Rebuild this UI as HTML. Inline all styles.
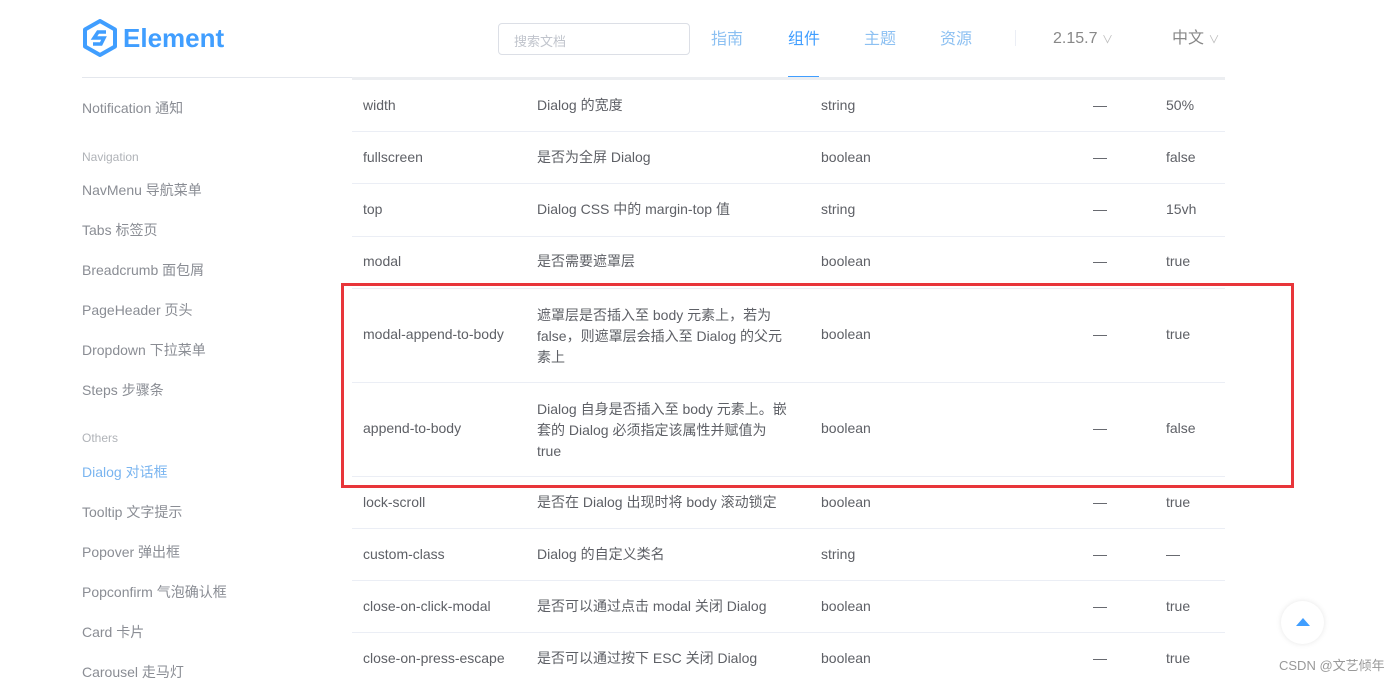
<!DOCTYPE html>
<html><head><meta charset="utf-8"><style>
*{margin:0;padding:0;box-sizing:border-box}
body{width:1400px;height:680px;overflow:hidden;background:#fff;font-family:"Liberation Sans","Noto Sans CJK SC",sans-serif;position:relative;color:#606266}
.a{position:absolute;white-space:nowrap}
.side{font-size:14px;color:#8a8d94;line-height:16px}
.sec{font-size:12px;color:#b0b3b8;line-height:14px}
.nav{font-size:16px;color:#8cc0f2;top:31px;line-height:18px}
.t{font-size:14px;color:#5e6066;line-height:16px}
.line{position:absolute;left:352px;width:873px;height:1px;background:#ebeef5}
</style></head><body>
<svg class="a" style="left:82px;top:19px" width="36" height="38" viewBox="0 0 36 38"><path d="M18 2 L33 10.5 V27.5 L18 36 L3 27.5 V10.5 Z" fill="none" stroke="#409eff" stroke-width="4" stroke-linejoin="round"/><path d="M24 13 H16 L12 19 H22 L19 25 H11" fill="none" stroke="#409eff" stroke-width="3.5"/></svg>
<div class="a" style="left:123px;top:23px;font-size:26px;line-height:30px;font-weight:bold;color:#409eff">Element</div>
<div class="a" style="left:498px;top:23px;width:192px;height:32px;border:1px solid #dcdfe6;border-radius:4px;font-size:13px;color:#c0c4cc;padding:7px 15px">搜索文档</div>
<div class="a nav" style="left:711px">指南</div>
<div class="a nav" style="left:788px;color:#409eff">组件</div>
<div class="a nav" style="left:864px">主题</div>
<div class="a nav" style="left:940px">资源</div>
<div class="a" style="left:788px;top:76px;width:31px;height:2px;background:#409eff"></div>
<div class="a" style="left:1015px;top:30px;width:1px;height:16px;background:#ebeef5"></div>
<div class="a" style="left:1053px;top:30px;font-size:16px;line-height:18px;color:#888">2.15.7 <span style="font-size:11px;color:#bbb">&#8744;</span></div>
<div class="a" style="left:1172px;top:30px;font-size:16px;line-height:18px;color:#888">中文 <span style="font-size:11px;color:#bbb">&#8744;</span></div>
<div class="a" style="left:82px;top:77px;width:270px;height:1px;background:#e4e7ed"></div>
<div class="a" style="left:352px;top:77px;width:873px;height:3px;background:#eceef1"></div>

<div class="a side" style="left:82px;top:100px">Notification 通知</div>
<div class="a sec" style="left:82px;top:150px">Navigation</div>
<div class="a side" style="left:82px;top:182px">NavMenu 导航菜单</div>
<div class="a side" style="left:82px;top:222px">Tabs 标签页</div>
<div class="a side" style="left:82px;top:262px">Breadcrumb 面包屑</div>
<div class="a side" style="left:82px;top:302px">PageHeader 页头</div>
<div class="a side" style="left:82px;top:342px">Dropdown 下拉菜单</div>
<div class="a side" style="left:82px;top:382px">Steps 步骤条</div>
<div class="a sec" style="left:82px;top:431px">Others</div>
<div class="a side" style="left:82px;top:464px;color:#7ab5f0">Dialog 对话框</div>
<div class="a side" style="left:82px;top:504px">Tooltip 文字提示</div>
<div class="a side" style="left:82px;top:544px">Popover 弹出框</div>
<div class="a side" style="left:82px;top:584px">Popconfirm 气泡确认框</div>
<div class="a side" style="left:82px;top:624px">Card 卡片</div>
<div class="a side" style="left:82px;top:664px">Carousel 走马灯</div>

<div class="line" style="top:131px"></div><div class="line" style="top:183px"></div><div class="line" style="top:236px"></div><div class="line" style="top:288px"></div><div class="line" style="top:382px"></div><div class="line" style="top:476px"></div><div class="line" style="top:528px"></div><div class="line" style="top:580px"></div><div class="line" style="top:632px"></div>

<div class="a t" style="left:363px;top:97px">width</div><div class="a t" style="left:537px;top:97px">Dialog 的宽度</div><div class="a t" style="left:821px;top:97px">string</div><div class="a t" style="left:1093px;top:97px">—</div><div class="a t" style="left:1166px;top:97px">50%</div>
<div class="a t" style="left:363px;top:149px">fullscreen</div><div class="a t" style="left:537px;top:149px">是否为全屏 Dialog</div><div class="a t" style="left:821px;top:149px">boolean</div><div class="a t" style="left:1093px;top:149px">—</div><div class="a t" style="left:1166px;top:149px">false</div>
<div class="a t" style="left:363px;top:201px">top</div><div class="a t" style="left:537px;top:201px">Dialog CSS 中的 margin-top 值</div><div class="a t" style="left:821px;top:201px">string</div><div class="a t" style="left:1093px;top:201px">—</div><div class="a t" style="left:1166px;top:201px">15vh</div>
<div class="a t" style="left:363px;top:253px">modal</div><div class="a t" style="left:537px;top:253px">是否需要遮罩层</div><div class="a t" style="left:821px;top:253px">boolean</div><div class="a t" style="left:1093px;top:253px">—</div><div class="a t" style="left:1166px;top:253px">true</div>
<div class="a t" style="left:363px;top:326px">modal-append-to-body</div><div class="a t" style="left:537px;top:305px;line-height:21px">遮罩层是否插入至 body 元素上，若为<br>false，则遮罩层会插入至 Dialog 的父元<br>素上</div><div class="a t" style="left:821px;top:326px">boolean</div><div class="a t" style="left:1093px;top:326px">—</div><div class="a t" style="left:1166px;top:326px">true</div>
<div class="a t" style="left:363px;top:420px">append-to-body</div><div class="a t" style="left:537px;top:399px;line-height:21px">Dialog 自身是否插入至 body 元素上。嵌<br>套的 Dialog 必须指定该属性并赋值为<br>true</div><div class="a t" style="left:821px;top:420px">boolean</div><div class="a t" style="left:1093px;top:420px">—</div><div class="a t" style="left:1166px;top:420px">false</div>
<div class="a t" style="left:363px;top:494px">lock-scroll</div><div class="a t" style="left:537px;top:494px">是否在 Dialog 出现时将 body 滚动锁定</div><div class="a t" style="left:821px;top:494px">boolean</div><div class="a t" style="left:1093px;top:494px">—</div><div class="a t" style="left:1166px;top:494px">true</div>
<div class="a t" style="left:363px;top:546px">custom-class</div><div class="a t" style="left:537px;top:546px">Dialog 的自定义类名</div><div class="a t" style="left:821px;top:546px">string</div><div class="a t" style="left:1093px;top:546px">—</div><div class="a t" style="left:1166px;top:546px">—</div>
<div class="a t" style="left:363px;top:598px">close-on-click-modal</div><div class="a t" style="left:537px;top:598px">是否可以通过点击 modal 关闭 Dialog</div><div class="a t" style="left:821px;top:598px">boolean</div><div class="a t" style="left:1093px;top:598px">—</div><div class="a t" style="left:1166px;top:598px">true</div>
<div class="a t" style="left:363px;top:650px">close-on-press-escape</div><div class="a t" style="left:537px;top:650px">是否可以通过按下 ESC 关闭 Dialog</div><div class="a t" style="left:821px;top:650px">boolean</div><div class="a t" style="left:1093px;top:650px">—</div><div class="a t" style="left:1166px;top:650px">true</div>

<div class="a" style="left:341px;top:283px;width:953px;height:205px;border:3px solid #e8353a"></div>
<div class="a" style="left:1281px;top:601px;width:43px;height:43px;border-radius:50%;background:#fff;box-shadow:0 0 6px rgba(0,0,0,.1)"></div>
<div class="a" style="left:1296px;top:618px;width:0;height:0;border-left:7px solid transparent;border-right:7px solid transparent;border-bottom:8px solid #409eff"></div>
<div class="a" style="left:1279px;top:658px;font-size:13px;line-height:16px;color:#999">CSDN @文艺倾年</div>
</body></html>
